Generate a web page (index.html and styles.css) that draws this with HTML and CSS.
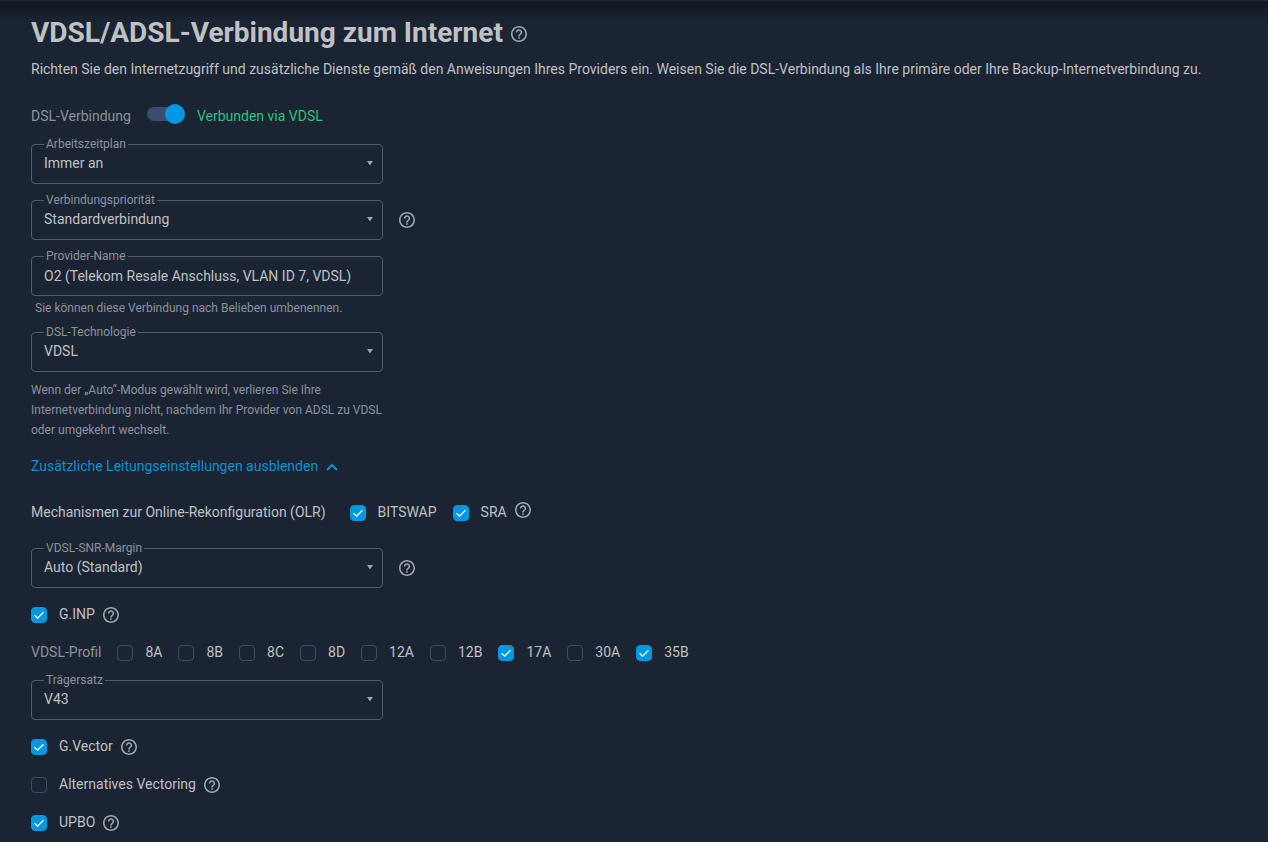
FILE: index.html
```html
<!DOCTYPE html>
<html lang="de">
<head>
<meta charset="utf-8">
<meta name="viewport" content="width=device-width, initial-scale=1">
<title>VDSL/ADSL-Verbindung zum Internet</title>
<link rel="stylesheet" href="styles.css">
</head>
<body>
<svg class="defs" aria-hidden="true">
  <symbol id="help" viewBox="2 2 20 20"><path fill="currentColor" d="M11 18h2v-2h-2v2zm1-16C6.48 2 2 6.48 2 12s4.48 10 10 10 10-4.480 10-10S17.520 2 12 2zm0 18c-4.410 0-8-3.590-8-8s3.590-8 8-8 8 3.590 8 8-3.590 8-8 8zm0-14c-2.210 0-4 1.790-4 4h2c0-1.100.9-2 2-2s2 .9 2 2c0 2-3 1.750-3 5h2c0-2.250 3-2.500 3-5 0-2.210-1.790-4-4-4z"/></symbol>
  <symbol id="tick" viewBox="0 0 16 16"><path fill="none" stroke="#fff" stroke-width="1.300" d="M3.500 8.200 6.600 11.200 12.500 5.300"/></symbol>
  <symbol id="arrow" viewBox="0 0 8 6"><path fill="currentColor" d="M1 1h6L4 5.500z"/></symbol>
</svg>
<main class="page">
  <header class="heading">
    <h1 class="title">VDSL/ADSL-Verbindung zum Internet</h1>
    <button class="help" type="button" aria-label="Hilfe"><svg><use href="#help"/></svg></button>
  </header>
  <p class="intro">Richten Sie den Internetzugriff und zusätzliche Dienste gemäß den Anweisungen Ihres Providers ein. Weisen Sie die DSL-Verbindung als Ihre primäre oder Ihre Backup-Internetverbindung zu.</p>

  <form class="settings">
    <div class="connection">
      <label class="muted" for="dsl">DSL-Verbindung</label>
      <input class="switch" id="dsl" type="checkbox" role="switch" checked>
      <span class="status">Verbunden via VDSL</span>
    </div>

    <div class="field">
      <label class="field-label" for="schedule">Arbeitszeitplan</label>
      <select class="control" id="schedule"><option>Immer an</option></select>
      <svg class="arrow"><use href="#arrow"/></svg>
    </div>

    <div class="field-row">
      <div class="field">
        <label class="field-label" for="priority">Verbindungspriorität</label>
        <select class="control" id="priority"><option>Standardverbindung</option></select>
        <svg class="arrow"><use href="#arrow"/></svg>
      </div>
      <button class="help" type="button" aria-label="Hilfe"><svg><use href="#help"/></svg></button>
    </div>

    <div class="group">
      <div class="field">
        <label class="field-label" for="provider">Provider-Name</label>
        <input class="control" id="provider" type="text" value="O2 (Telekom Resale Anschluss, VLAN ID 7, VDSL)">
      </div>
      <p class="hint">Sie können diese Verbindung nach Belieben umbenennen.</p>
    </div>

    <div class="group">
      <div class="field">
        <label class="field-label" for="technology">DSL-Technologie</label>
        <select class="control" id="technology"><option>VDSL</option></select>
        <svg class="arrow"><use href="#arrow"/></svg>
      </div>
      <p class="note">Wenn der „Auto“-Modus gewählt wird, verlieren Sie Ihre Internetverbindung nicht, nachdem Ihr Provider von ADSL zu VDSL oder umgekehrt wechselt.</p>
    </div>

    <button class="collapse" type="button">Zusätzliche Leitungseinstellungen ausblenden
      <svg class="chevron" viewBox="0 0 12 10"><path fill="none" stroke="currentColor" stroke-width="2" d="M1 9 6 4l5 5"/></svg>
    </button>

    <div class="olr">
      <span class="olr-label">Mechanismen zur Online-Rekonfiguration (OLR)</span>
      <label class="check"><span class="box"><input type="checkbox" checked><svg><use href="#tick"/></svg></span>BITSWAP</label>
      <div class="option">
        <label class="check"><span class="box"><input type="checkbox" checked><svg><use href="#tick"/></svg></span>SRA</label>
        <button class="help help-raised" type="button" aria-label="Hilfe"><svg><use href="#help"/></svg></button>
      </div>
    </div>

    <div class="field-row">
      <div class="field">
        <label class="field-label" for="snr">VDSL-SNR-Margin</label>
        <select class="control" id="snr"><option>Auto (Standard)</option></select>
        <svg class="arrow"><use href="#arrow"/></svg>
      </div>
      <button class="help" type="button" aria-label="Hilfe"><svg><use href="#help"/></svg></button>
    </div>

    <div class="option">
      <label class="check"><span class="box"><input type="checkbox" checked><svg><use href="#tick"/></svg></span>G.INP</label>
      <button class="help" type="button" aria-label="Hilfe"><svg><use href="#help"/></svg></button>
    </div>

    <div class="profiles" role="group" aria-labelledby="profile-label">
      <span class="muted" id="profile-label">VDSL-Profil</span>
      <label class="check"><span class="box"><input type="checkbox"><svg><use href="#tick"/></svg></span>8A</label>
      <label class="check"><span class="box"><input type="checkbox"><svg><use href="#tick"/></svg></span>8B</label>
      <label class="check"><span class="box"><input type="checkbox"><svg><use href="#tick"/></svg></span>8C</label>
      <label class="check"><span class="box"><input type="checkbox"><svg><use href="#tick"/></svg></span>8D</label>
      <label class="check"><span class="box"><input type="checkbox"><svg><use href="#tick"/></svg></span>12A</label>
      <label class="check"><span class="box"><input type="checkbox"><svg><use href="#tick"/></svg></span>12B</label>
      <label class="check"><span class="box"><input type="checkbox" checked><svg><use href="#tick"/></svg></span>17A</label>
      <label class="check"><span class="box"><input type="checkbox"><svg><use href="#tick"/></svg></span>30A</label>
      <label class="check"><span class="box"><input type="checkbox" checked><svg><use href="#tick"/></svg></span>35B</label>
    </div>

    <div class="field">
      <label class="field-label" for="carrier">Trägersatz</label>
      <select class="control" id="carrier"><option>V43</option></select>
      <svg class="arrow"><use href="#arrow"/></svg>
    </div>

    <div class="option">
      <label class="check"><span class="box"><input type="checkbox" checked><svg><use href="#tick"/></svg></span>G.Vector</label>
      <button class="help" type="button" aria-label="Hilfe"><svg><use href="#help"/></svg></button>
    </div>
    <div class="option">
      <label class="check"><span class="box"><input type="checkbox"><svg><use href="#tick"/></svg></span>Alternatives Vectoring</label>
      <button class="help" type="button" aria-label="Hilfe"><svg><use href="#help"/></svg></button>
    </div>
    <div class="option">
      <label class="check"><span class="box"><input type="checkbox" checked><svg><use href="#tick"/></svg></span>UPBO</label>
      <button class="help" type="button" aria-label="Hilfe"><svg><use href="#help"/></svg></button>
    </div>
  </form>
</main>
</body>
</html>
```
FILE: styles.css
```css
:root {
  --bg: #1b2432;
  --text: #bfc1c5;
  --muted: #8b939e;
  --line: #535c69;
  --blue: #0098e0;
}

* { box-sizing: border-box; }

body {
  margin: 0;
  background: var(--bg);
  color: var(--text);
  font: 14px/20px Roboto, "Liberation Sans", sans-serif;
}

.defs { display: none; }

.page {
  padding: 16px 31px 8px;
  background: linear-gradient(#141824, #151a27 6px, #1b2432 20px);
  border-top: 1px solid #222a38;
}

.heading {
  display: flex;
  align-items: center;
  gap: 8px;
}

.heading .help { margin-top: 2px; }

.title {
  margin: 0;
  font-size: 28px;
  line-height: 32px;
  font-weight: 700;
}

.intro { margin: 10px 0 25px; }

.settings {
  display: flex;
  flex-direction: column;
  align-items: flex-start;
  gap: 16px;
}

.help {
  display: flex;
  flex: none;
  padding: 0;
  border: 0;
  background: none;
  color: #a0a6ae;
}

.help svg { width: 16px; height: 16px; }
.option .help-raised { align-self: flex-start; }

.muted { color: var(--muted); }

.connection {
  display: flex;
  align-items: center;
  height: 24px;
}

.switch {
  appearance: none;
  align-self: flex-start;
  display: grid;
  align-items: center;
  width: 38px;
  height: 20px;
  margin: 0 12px 0 16px;
}

.switch::before,
.switch::after {
  content: "";
  grid-area: 1 / 1;
}

.switch::before {
  height: 14px;
  margin-right: 2px;
  border-radius: 7px;
  background: #3c4c70;
}

.switch::after {
  width: 20px;
  height: 20px;
  border-radius: 50%;
  background: var(--blue);
}

.switch:checked::after { justify-self: end; }

.status { color: #2cc27e; }

.field-row {
  display: flex;
  align-items: center;
  gap: 16px;
}

.field {
  position: relative;
  width: 352px;
  max-width: 100%;
}

.field-label {
  position: absolute;
  top: -8px;
  left: 13px;
  padding: 0 2px;
  background: var(--bg);
  color: var(--muted);
  font-size: 12px;
  line-height: 16px;
}

.control {
  appearance: none;
  display: block;
  width: 100%;
  height: 40px;
  padding: 0 32px 0 12px;
  border: 1px solid var(--line);
  border-radius: 4px;
  background: transparent;
  color: var(--text);
  font: inherit;
}

select.control { padding-bottom: 2px; }
input.control { padding-right: 12px; }

.arrow {
  position: absolute;
  top: 16px;
  right: 9px;
  width: 8px;
  height: 6px;
  color: #a0a6ae;
  pointer-events: none;
}

.group { max-width: 352px; }

.hint,
.note {
  margin: 4px 0 0;
  padding-left: 4px;
  color: var(--muted);
  font-size: 12px;
  line-height: 16px;
}

.note {
  margin-top: 8px;
  padding-left: 0;
  line-height: 20px;
}

.collapse {
  display: flex;
  align-items: center;
  gap: 8px;
  padding: 0;
  border: 0;
  background: none;
  color: #118fd0;
  font: inherit;
}

.chevron { width: 12px; height: 10px; }

.olr {
  display: flex;
  align-items: flex-start;
  gap: 16px;
  margin: 10px 0 8px;
}

.olr-label { margin-right: 8px; }

.option {
  display: flex;
  align-items: center;
  gap: 8px;
}

.profiles {
  display: flex;
  flex-wrap: wrap;
  align-items: flex-start;
  gap: 16px;
}

.check {
  display: flex;
  align-items: flex-start;
  gap: 12px;
  min-height: 22px;
}

.box {
  display: grid;
  width: 16px;
  height: 16px;
  margin-top: 3px;
}

.box input,
.box svg {
  grid-area: 1 / 1;
  width: 16px;
  height: 16px;
  margin: 0;
}

.box input {
  appearance: none;
  border: 1px solid #3c4c70;
  border-radius: 4px;
}

.box input:checked {
  border-color: var(--blue);
  background: var(--blue);
}

.box svg {
  visibility: hidden;
  pointer-events: none;
}

.box input:checked + svg { visibility: visible; }
```
